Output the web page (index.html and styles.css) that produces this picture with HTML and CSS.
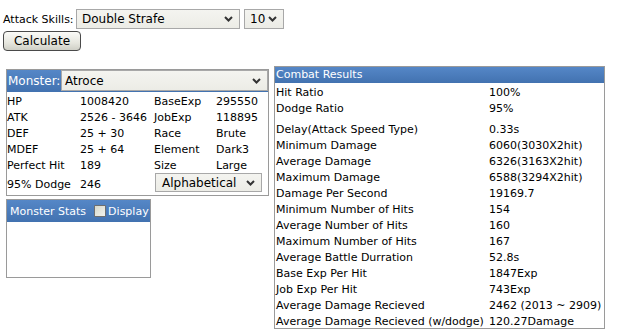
FILE: index.html
```html
<!DOCTYPE html>
<html>
<head>
<meta charset="utf-8">
<link rel="stylesheet" href="styles.css">
</head>
<body>
<div class="toprow">
  <span class="lbl">Attack Skills:</span>
  <div class="sel skill"><span>Double Strafe</span><svg class="chev" width="9" height="6" viewBox="0 0 9 6"><path d="M1 1 L4.5 4.5 L8 1" fill="none" stroke="#333" stroke-width="2"/></svg></div>
  <div class="sel lvl"><span>10</span><svg class="chev" width="9" height="6" viewBox="0 0 9 6"><path d="M1 1 L4.5 4.5 L8 1" fill="none" stroke="#333" stroke-width="2"/></svg></div>
</div>
<div class="btnrow"><button class="btn">Calculate</button></div>

<div class="main">
  <div class="leftcol">
    <div class="panel monster">
      <div class="mhead">
        <span class="mlabel">Monster:</span>
        <div class="sel msel"><span>Atroce</span><svg class="chev" width="9" height="6" viewBox="0 0 9 6"><path d="M1 1 L4.5 4.5 L8 1" fill="none" stroke="#333" stroke-width="2"/></svg></div>
      </div>
      <div class="mgrid">
        <span>HP</span><span>1008420</span><span>BaseExp</span><span>295550</span>
        <span>ATK</span><span>2526 - 3646</span><span>JobExp</span><span>118895</span>
        <span>DEF</span><span>25 + 30</span><span>Race</span><span>Brute</span>
        <span>MDEF</span><span>25 + 64</span><span>Element</span><span>Dark3</span>
        <span>Perfect Hit</span><span>189</span><span>Size</span><span>Large</span>
        <span>95% Dodge</span><span>246</span>
        <div class="span2"><div class="sel sortsel"><span>Alphabetical</span><svg class="chev" width="9" height="6" viewBox="0 0 9 6"><path d="M1 1 L4.5 4.5 L8 1" fill="none" stroke="#333" stroke-width="2"/></svg></div></div>
      </div>
    </div>
    <div class="panel stats">
      <div class="shead">
        <span>Monster Stats</span>
        <span class="chk"></span>
        <span>Display</span>
      </div>
    </div>
  </div>

  <div class="panel combat">
    <div class="chead">Combat Results</div>
    <div class="cgrid">
      <span>Hit Ratio</span><span>100%</span>
      <span>Dodge Ratio</span><span>95%</span>
    </div>
    <div class="cgrid second">
      <span>Delay(Attack Speed Type)</span><span>0.33s</span>
      <span>Minimum Damage</span><span>6060(3030X2hit)</span>
      <span>Average Damage</span><span>6326(3163X2hit)</span>
      <span>Maximum Damage</span><span>6588(3294X2hit)</span>
      <span>Damage Per Second</span><span>19169.7</span>
      <span>Minimum Number of Hits</span><span>154</span>
      <span>Average Number of Hits</span><span>160</span>
      <span>Maximum Number of Hits</span><span>167</span>
      <span>Average Battle Durration</span><span>52.8s</span>
      <span>Base Exp Per Hit</span><span>1847Exp</span>
      <span>Job Exp Per Hit</span><span>743Exp</span>
      <span>Average Damage Recieved</span><span>2462 (2013 ~ 2909)</span>
      <span>Average Damage Recieved (w/dodge)</span><span>120.27Damage</span>
    </div>
  </div>
</div>
</body>
</html>
```

FILE: styles.css
```css
html, body {
  margin: 0;
  padding: 0;
  background: #fff;
}
body {
  font-family: "DejaVu Sans", Verdana, sans-serif;
  font-size: 11px;
  color: #000;
}
.toprow {
  display: flex;
  align-items: center;
  padding: 9px 0 0 3px;
  height: 20px;
}
.lbl {
  width: 73px;
  font-size: 11px;
}
.sel {
  box-sizing: border-box;
  display: flex;
  align-items: center;
  justify-content: space-between;
  height: 20px;
  border: 1px solid #a8a8a8;
  background: linear-gradient(#f4f4f0, #ecece6);
  padding: 0 6px 0 5px;
  font-size: 12px;
  color: #000;
  white-space: nowrap;
}
.chev { flex: none; }
.skill { width: 164px; }
.lvl { width: 40px; margin-left: 4px; padding-left: 5px; }
.btnrow {
  padding: 2px 0 0 3px;
  height: 20px;
}
.btn {
  box-sizing: border-box;
  width: 78px;
  height: 20px;
  border: 1px solid #4a4a4a;
  border-radius: 4px;
  background: linear-gradient(#fbfbf8, #e6e6de 60%, #cfcfc6);
  font-family: "DejaVu Sans", Verdana, sans-serif;
  font-size: 12px;
  padding: 0;
  color: #000;
}
.main {
  display: flex;
  align-items: flex-start;
  gap: 5px;
  padding: 15px 0 0 6px;
}
.leftcol {
  margin-top: 3px;
  width: 263px;
  display: flex;
  flex-direction: column;
  gap: 3px;
}
.panel {
  box-sizing: border-box;
  border: 1px solid #9a9a9a;
  background: #fff;
}
.monster { width: 263px; }
.mhead {
  height: 22px;
  display: flex;
  align-items: center;
  background: linear-gradient(#5587c7, #4272b0);
  color: #fff;
  font-size: 12px;
}
.mlabel { width: 53px; padding-left: 1px; }
.msel {
  flex: 1;
  height: 21px;
  align-self: flex-start;
  padding-left: 3px;
}
.mgrid {
  display: grid;
  grid-template-columns: 73px 74px 62px 1fr;
  grid-template-rows: repeat(5, 16px) 22px;
  align-items: center;
  padding-top: 1px;
}
.mgrid > span { white-space: nowrap; }
.span2 { grid-column: span 2; padding-left: 1px; align-self: start; }
.sortsel { width: 107px; height: 19px; padding-left: 6px; }
.stats {
  width: 145px;
  height: 79px;
}
.shead {
  height: 22px;
  display: flex;
  align-items: center;
  background: linear-gradient(#5587c7, #4272b0);
  color: #fff;
  font-size: 11px;
  padding-left: 3px;
  white-space: nowrap;
}
.chk {
  box-sizing: border-box;
  width: 12px;
  height: 12px;
  margin: 0 2px 0 8px;
  border: 1px solid #6e6e6e;
  background: linear-gradient(135deg, #d6d8cc, #f2f2ec);
  border-radius: 1px;
}
.combat {
  width: 331px;
  height: 263px;
}
.chead {
  height: 16px;
  line-height: 16px;
  background: linear-gradient(#5587c7, #4272b0);
  color: #fff;
  font-size: 11px;
  padding-left: 1px;
}
.cgrid {
  display: grid;
  grid-template-columns: 213px 1fr;
  grid-auto-rows: 16px;
  align-items: center;
  padding-top: 1px;
  font-size: 11px;
}
.cgrid.second { padding-top: 5px; }
.cgrid > span { white-space: nowrap; padding-left: 1px; }
```
